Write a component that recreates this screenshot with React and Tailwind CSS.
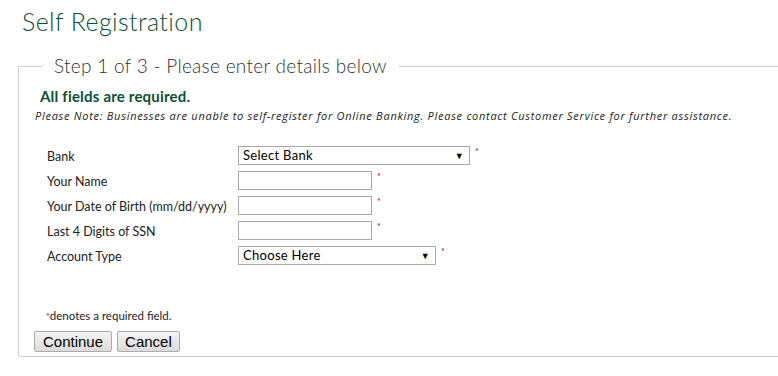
import React from "react";

const green = "text-[#0d4f33]";

function Req() {
  return <span className="ml-[5px] mt-[1px] text-[9px] leading-[10px] text-[#c00000]">*</span>;
}

function SelectBox({ label, width }) {
  return (
    <div
      className={`flex h-[19px] items-center justify-between border border-[#a9a9a9] bg-white pl-[4px] pr-[5px] text-[13px] tracking-[0.3px] text-black ${width}`}
    >
      <span>{label}</span>
      <span className="text-[9px]">▼</span>
    </div>
  );
}

function TextBox() {
  return <div className="h-[19px] w-[134px] border border-[#a9a9a9] bg-white" />;
}

const rows = [
  { label: "Bank", field: <SelectBox label="Select Bank" width="w-[232px]" /> },
  { label: "Your Name", field: <TextBox /> },
  { label: "Your Date of Birth (mm/dd/yyyy)", field: <TextBox /> },
  { label: "Last 4 Digits of SSN", field: <TextBox /> },
  { label: "Account Type", field: <SelectBox label="Choose Here" width="w-[198px]" /> },
];

export default function App() {
  return (
    <div className="h-[376px] w-[778px] overflow-hidden bg-white font-['Lato',sans-serif] text-[#222]">
      {/* Title */}
      <h1 className={`pl-[22px] pt-[6px] text-[25px] leading-[30px] font-light tracking-[0.4px] ${green}`}>
        Self Registration
      </h1>

      {/* Form box */}
      <fieldset className="ml-[18px] mt-[19px] w-[770px] border border-r-0 border-[#d0d0d0] pb-[4px] pl-[15px]">
        <legend className="ml-[8px] px-[12px] text-[19px] leading-[22px] font-light tracking-[0.3px] text-[#333]">
          Step 1 of 3 - Please enter details below
        </legend>

        <p className={`mt-[10px] pl-[6px] text-[15px] leading-[18px] font-bold tracking-[0.2px] ${green}`}>
          All fields are required.
        </p>
        <p className="mt-[4px] pl-[1px] font-['Open_Sans',sans-serif] text-[11px] leading-[14px] italic tracking-[0.72px] text-[#222]">
          Please Note: Businesses are unable to self-register for Online Banking. Please contact Customer Service for further
          assistance.
        </p>

        <div className="mt-[23px] flex flex-col gap-[6px] pl-[13px]">
          {rows.map((r) => (
            <div key={r.label} className="flex h-[19px] items-center">
              <span className="mt-[2px] w-[191px] text-[12.5px] leading-[16px] text-[#222]">{r.label}</span>
              <div className="flex items-start">
                {r.field}
                <Req />
              </div>
            </div>
          ))}
        </div>

        <p className="mt-[44px] pl-[12px] text-[11.5px] leading-[14px] text-[#222]">
          <span className="text-[9px] text-[#c00000]">*</span>denotes a required field.
        </p>

        <div className="mt-[7px] flex gap-[5px]">
          <button className="h-[21px] rounded-[2px] border border-[#acacac] bg-gradient-to-b from-[#f4f4f4] to-[#dcdcdc] px-[8px] font-['Liberation_Sans',sans-serif] text-[15px] leading-[18px] text-black">
            Continue
          </button>
          <button className="h-[21px] rounded-[2px] border border-[#acacac] bg-gradient-to-b from-[#f4f4f4] to-[#dcdcdc] px-[7px] font-['Liberation_Sans',sans-serif] text-[15px] leading-[18px] text-black">
            Cancel
          </button>
        </div>
      </fieldset>
    </div>
  );
}
